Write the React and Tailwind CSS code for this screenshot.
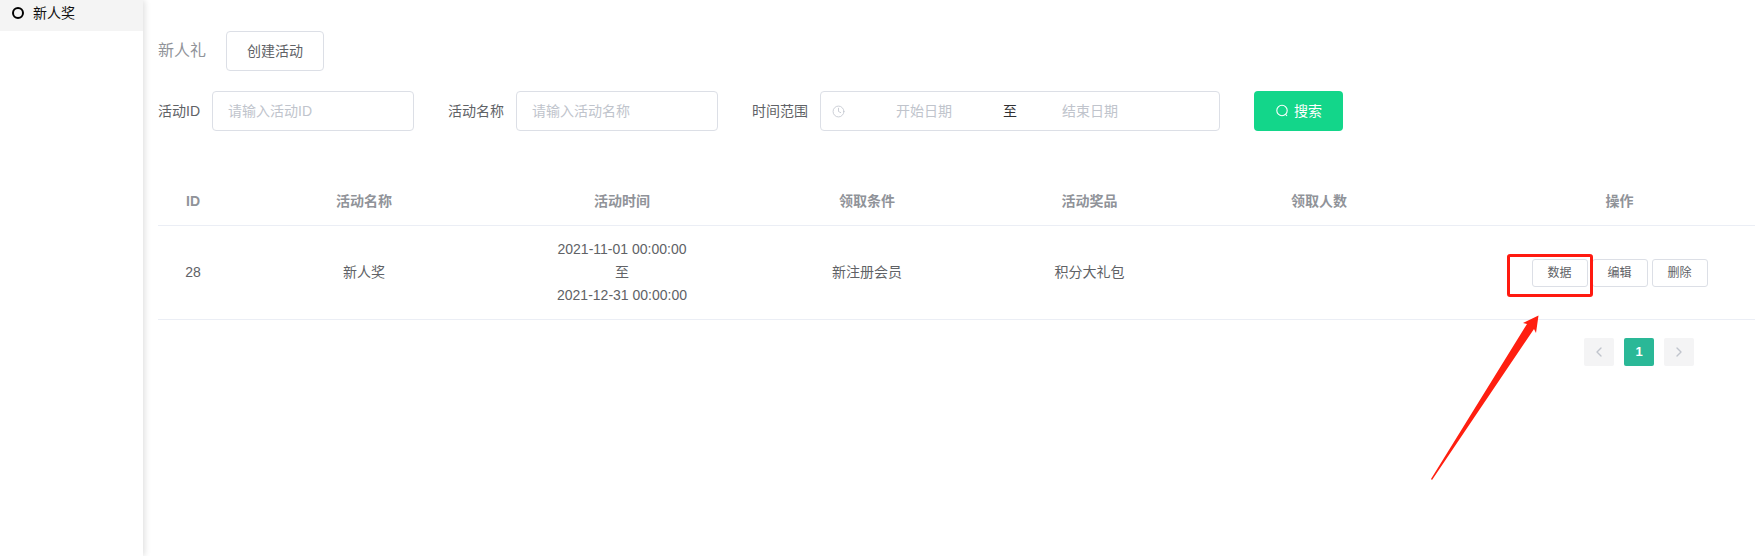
import { ChevronLeft, ChevronRight, Clock } from 'lucide-react';

const Field = ({ label, placeholder, width, className }) => (
  <div className={`flex items-center ${className}`}>
    <span className="mr-[12px] text-[#606266]">{label}</span>
    <div className={`flex h-[40px] items-center rounded border border-[#dcdfe6] pl-[15px] text-[#c0c4cc] ${width}`}>
      {placeholder}
    </div>
  </div>
);

const OpButton = ({ children }) => (
  <button className="h-[28px] w-[56px] rounded-[3px] border border-[#dcdfe6] bg-white text-[12px] text-[#606266]">
    {children}
  </button>
);

const headers = ['ID', '活动名称', '活动时间', '领取条件', '活动奖品', '领取人数', '操作'];

const App = () => {
  return (
    <div className="relative flex h-[556px] overflow-hidden bg-white font-['Liberation_Sans','Noto_Sans_CJK_SC',sans-serif] text-[14px]">
      <aside className="w-[143px] shrink-0 bg-white shadow-[2px_0_6px_rgba(0,0,0,0.12)]">
        <div className="flex h-[31px] items-center bg-[#f4f4f4] pb-[5px] pl-[12px] text-[#111]">
          <span className="mr-[9px] h-[12px] w-[12px] rounded-full border-2 border-black" />
          新人奖
        </div>
      </aside>

      <main className="min-w-0 flex-1 pl-[15px] pt-[31px]">
        <div className="flex h-[40px] items-center">
          <span className="mr-[20px] text-[16px] text-[#909399]">新人礼</span>
          <button className="h-[40px] w-[98px] rounded border border-[#dcdfe6] bg-white text-[#606266]">创建活动</button>
        </div>

        <div className="mt-[20px] flex items-center">
          <Field label="活动ID" placeholder="请输入活动ID" width="w-[202px]" />
          <Field label="活动名称" placeholder="请输入活动名称" width="w-[202px]" className="ml-[34px]" />
          <div className="ml-[34px] flex items-center">
            <span className="mr-[12px] text-[#606266]">时间范围</span>
            <div className="flex h-[40px] w-[400px] items-center rounded border border-[#dcdfe6] text-[#c0c4cc]">
              <Clock size={13} strokeWidth={1.5} className="ml-[11px] shrink-0" />
              <span className="w-[158px] text-center">开始日期</span>
              <span className="w-[14px] text-center text-[#303133]">至</span>
              <span className="w-[146px] text-center">结束日期</span>
            </div>
          </div>
          <button className="ml-[34px] flex h-[40px] w-[89px] items-center justify-center rounded bg-[#13d68a] text-white">
            <svg width="14" height="14" viewBox="0 0 14 14" fill="none" stroke="currentColor" strokeWidth="1.1" className="mr-[5px]">
              <circle cx="7" cy="6.5" r="5.2" />
              <path d="M10.6 10.4 12 12" />
            </svg>
            搜索
          </button>
        </div>

        <table className="mt-[46px] w-full table-fixed border-collapse text-center">
          <colgroup>
            <col className="w-[70px]" />
            <col className="w-[272px]" />
            <col className="w-[244px]" />
            <col className="w-[246px]" />
            <col className="w-[199px]" />
            <col className="w-[260px]" />
            <col />
          </colgroup>
          <thead>
            <tr className="h-[48px] border-b border-[#ebeef5] font-bold text-[#909399]">
              {headers.map((h, i) => (
                <th key={h} className={i === 6 ? 'pl-[35px] pt-[1px]' : 'pt-[1px]'}>{h}</th>
              ))}
            </tr>
          </thead>
          <tbody>
            <tr className="h-[94px] border-b border-[#ebeef5] text-[#606266]">
              <td>28</td>
              <td>新人奖</td>
              <td className="leading-[23px]">
                <div>2021-11-01 00:00:00</div>
                <div>至</div>
                <div>2021-12-31 00:00:00</div>
              </td>
              <td>新注册会员</td>
              <td>积分大礼包</td>
              <td />
              <td className="pl-[35px] pt-[2px]">
                <div className="flex justify-center gap-[4px]">
                  <OpButton>数据</OpButton>
                  <OpButton>编辑</OpButton>
                  <OpButton>删除</OpButton>
                </div>
              </td>
            </tr>
          </tbody>
        </table>

        <div className="mr-[61px] mt-[18px] flex justify-end gap-[10px]">
          <button className="flex h-[28px] w-[30px] items-center justify-center rounded-[2px] bg-[#f4f4f5] text-[#c0c4cc]">
            <ChevronLeft size={16} strokeWidth={2} />
          </button>
          <button className="h-[28px] w-[30px] rounded-[2px] bg-[#2ab897] text-[13px] font-bold text-white">1</button>
          <button className="flex h-[28px] w-[30px] items-center justify-center rounded-[2px] bg-[#f4f4f5] text-[#c0c4cc]">
            <ChevronRight size={16} strokeWidth={2} />
          </button>
        </div>
      </main>

      {/* annotation drawn over the page */}
      <div className="absolute left-[1507px] top-[254px] h-[43px] w-[86px] rounded-[3px] border-[3px] border-[#ff1a10]" />
      <svg className="absolute left-[1425px] top-[310px]" width="120" height="175" viewBox="1425 310 120 175">
        <polygon fill="#ff1f10" points="1431,479 1527,324 1523,323 1538.5,315.5 1536,333 1534,329 1432,480" />
      </svg>
    </div>
  );
};

export default App;
